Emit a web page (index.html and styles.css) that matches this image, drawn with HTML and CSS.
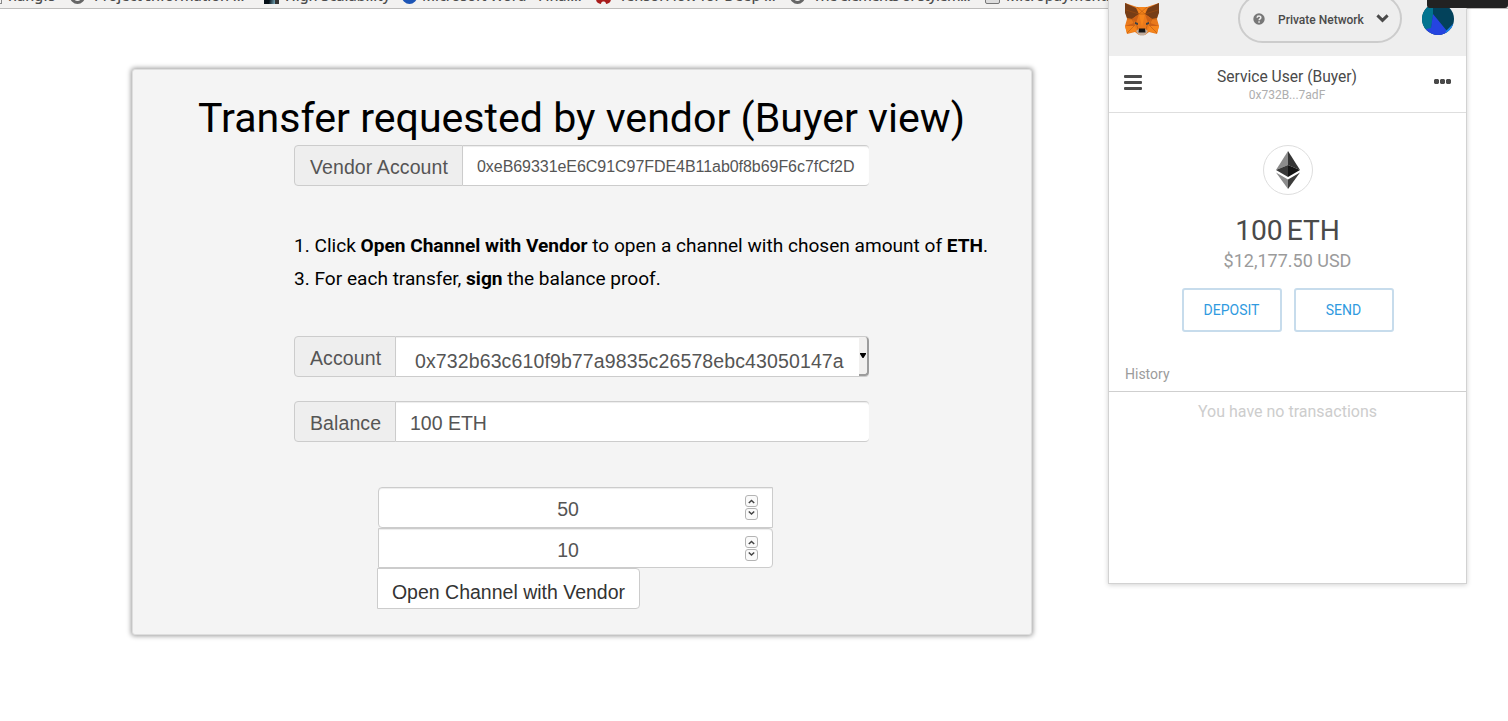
FILE: index.html
```html
<!DOCTYPE html>
<html lang="en">
<head>
<meta charset="utf-8">
<title>Transfer requested by vendor</title>
<link rel="stylesheet" href="styles.css">
</head>
<body>
<nav class="bookmarks">
  <span class="bm bm-1"><i class="page"></i><b>hangfs</b></span>
  <span class="bm bm-2"><i class="globe"></i><b>Project Information ...</b></span>
  <span class="bm bm-3"><i class="photo"></i><b>High Scalability</b></span>
  <span class="bm bm-4"><i class="blue"></i><b>Microsoft Word - Final...</b></span>
  <span class="bm bm-5"><i class="red"></i><b>TensorFlow for Deep ...</b></span>
  <span class="bm bm-6"><i class="globe"></i><b>The elements of stylem...</b></span>
  <span class="bm bm-7"><i class="folder"></i><b>Micropayments</b></span>
</nav>

<main class="card">
  <h1><span>Transfer requested by vendor (Buyer view)</span></h1>
  <div class="group">
    <label class="addon vendor"><span>Vendor Account</span></label>
    <div class="field hash"><span>0xeB69331eE6C91C97FDE4B11ab0f8b69F6c7fCf2D</span></div>
  </div>
  <div class="steps">
    <p><span>1. Click <strong>Open Channel with Vendor</strong> to open a channel with chosen amount of <strong>ETH</strong>.</span></p>
    <p><span>3. For each transfer, <strong>sign</strong> the balance proof.</span></p>
  </div>
  <div class="group account">
    <label class="addon"><span>Account</span></label>
    <div class="field select"><span>0x732b63c610f9b77a9835c26578ebc43050147a</span><div class="drop"><svg width="6" height="5" viewBox="0 0 6 5"><path d="M0 0h6v1L3.5 5h-1L0 1z"/></svg></div></div>
  </div>
  <div class="group balance">
    <label class="addon"><span>Balance</span></label>
    <div class="field"><span>100 ETH</span></div>
  </div>
  <div class="amounts">
    <div class="number first"><span>50</span>
      <svg class="spin" width="14" height="26" viewBox="0 0 14 26"><g fill="#fafafa" stroke="#b4b4b4"><rect x=".5" y=".5" width="12" height="11" rx="2.5"/><rect x=".5" y="13.5" width="12" height="11" rx="2.5"/></g><path d="M3.8 8l2.7-2.5L9.2 8M3.8 16.5l2.7 2.5 2.7-2.5" fill="none" stroke="#444" stroke-width="1.5"/></svg>
    </div>
    <div class="number second"><span>10</span>
      <svg class="spin" width="14" height="26" viewBox="0 0 14 26"><g fill="#fafafa" stroke="#b4b4b4"><rect x=".5" y=".5" width="12" height="11" rx="2.5"/><rect x=".5" y="13.5" width="12" height="11" rx="2.5"/></g><path d="M3.8 8l2.7-2.5L9.2 8M3.8 16.5l2.7 2.5 2.7-2.5" fill="none" stroke="#444" stroke-width="1.5"/></svg>
    </div>
    <button class="open"><span>Open Channel with Vendor</span></button>
  </div>
</main>

<aside class="wallet">
  <header class="wallet-head">
    <svg class="fox" width="36" height="34" viewBox="0 0 36 34">
      <path fill="#e9791b" d="M1 1l12 4h10l12-4-1 11-1 5 2 7-2 8-8-2-4 3h-6l-4-3-8 2-2-8 2-7-1-5z"/>
      <path fill="#763d16" d="M1 1l11 5 3 6-7 5-5-1-2-5zM35 1L24 6l-3 6 7 5 5-1 2-5z"/>
      <path fill="#f6851b" d="M13 5h10l-2 7-3 13-3-13zM1 24l9-1 3 6-10 2zM35 24l-9-1-3 6 10 2z"/>
      <path fill="#cd6116" d="M8 17l7-5-3 9zM28 17l-7-5 3 9zM1 24l9-3v3zM35 24l-9-3v3z"/>
      <path fill="none" stroke="#a9510f" stroke-width=".5" d="M13 5l8 7M23 5l-8 7h6M3 17l5 0 3 6-8 8M33 17l-5 0-3 6 8 8M12 21l3 9M24 21l-3 9M2 8l13 4M34 8l-13 4"/>
      <path fill="#c0ad9e" d="M12 29l3-2h6l3 2-2 3-2 1.5h-4L14 32z"/>
      <path fill="#161616" d="M15 26.500h6l.5 4h-7z"/>
      <path fill="#394048" d="M11 20l3 1v2l-3-1zM25 20l-3 1v2l3-1z"/>
    </svg>
    <div class="network">
      <svg class="help" width="12" height="12" viewBox="0 0 12 12"><circle cx="6" cy="6" r="5.7" fill="#777"/><path d="M4.100 4.700C4.200 2.400 7.900 2.500 7.800 4.600 7.700 5.900 6.100 5.800 6.100 7.300" fill="none" stroke="#eee" stroke-width="1.5"/><path d="M5.300 8.300h1.500v1.400H5.300z" fill="#eee"/></svg>
      <span>Private Network</span>
      <svg class="chev" width="13" height="9" viewBox="0 0 13 9"><path d="M1.400 1.400l5.100 5 5.100-5" fill="none" stroke="#4a4a4a" stroke-width="2.900"/></svg>
    </div>
    <svg class="avatar" width="32" height="32" viewBox="0 0 32 32"><defs><clipPath id="disc"><circle cx="16" cy="16" r="16"/></clipPath></defs><g clip-path="url(#disc)"><path fill="#03425b" d="M0 0h32v32H0z"/><path fill="#027490" d="M0 0h11v13L9 26 0 28z"/><path fill="#2544e0" d="M11 11l14 17v4H5l-1-6 5-1z"/><path fill="#1a83ee" d="M24 28l8-8v12h-9z"/></g></svg>
  </header>
  <div class="identity">
    <svg width="18" height="15" viewBox="0 0 18 15"><path fill="#4a4a4a" d="M1 0h16q1 0 1 1v1q0 1-1 1H1Q0 3 0 2V1Q0 0 1 0zM1 6h16q1 0 1 1v1q0 1-1 1H1q-1 0-1-1V7q0-1 1-1zM1 12h16q1 0 1 1v1q0 1-1 1H1q-1 0-1-1v-1q0-1 1-1z"/></svg>
    <div class="who"><span class="name">Service User (Buyer)</span><span class="addr">0x732B...7adF</span></div>
    <svg width="17" height="5" viewBox="0 0 17 5"><path fill="#4a4a4a" d="M1 0h3l1 1v3L4 5H1L0 4V1zM7 0h3l1 1v3l-1 1H7L6 4V1zM13 0h3l1 1v3l-1 1h-3l-1-1V1z"/></svg>
  </div>
  <div class="funds">
    <div class="coin"><svg width="24" height="38" viewBox="0 0 24 38"><path fill="#8c8c8c" d="M12 0v14L0 19z"/><path fill="#343434" d="M12 0v14l12 5z"/><path fill="#393939" d="M12 14v12L0 19z"/><path fill="#141414" d="M12 14v12l12-7z"/><path fill="#8c8c8c" d="M0 21.500l12 7V38z"/><path fill="#3c3c3b" d="M24 21.500l-12 7V38z"/></svg></div>
    <div class="total"><span>100 ETH</span></div>
    <div class="usd"><span>$12,177.50 USD</span></div>
    <div class="actions"><button><span>DEPOSIT</span></button><button><span>SEND</span></button></div>
  </div>
  <div class="history"><span>History</span></div>
  <div class="empty"><span>You have no transactions</span></div>
</aside>
<div class="tooltip"></div>
</body>
</html>
```

FILE: styles.css
```css
* { box-sizing: border-box; }
html, body { margin: 0; height: 100%; overflow: hidden; background: #fff; }
body { position: relative; font-family: "Liberation Sans", Arial, sans-serif; color: #000; }
button { margin: 0; padding: 0; background: #fff; font: inherit; }
svg { display: block; flex: none; }
span { white-space: nowrap; }

.bookmarks { display: flex; height: 9px; overflow: hidden; background: #f2f1f0; border-bottom: 1px solid #bdbcbb; }
.bm { display: flex; flex: none; align-items: flex-start; height: 20px; margin-top: -14px; }
.bm b { font: 500 14.4px/20px "Noto Sans", sans-serif; color: #4c4c4c; white-space: nowrap; }
.bm i { flex: none; width: 15px; height: 15px; margin: 3px 6px 0 0; }
.bm-1 { width: 83px; margin-left: -13px; }
.bm-2 { width: 194px; }
.bm-2 i { margin-right: 9px; }
.bm-3 { width: 138px; }
.bm-4 { width: 194px; }
.bm-4 i { margin-right: 5px; }
.bm-4 b { letter-spacing: -.1px; }
.bm-5 { width: 194px; }
.bm-5 i { margin-right: 8px; }
.bm-6 { width: 195px; }
.bm-6 i { margin-right: 8px; }
.bm-6 b { letter-spacing: -.6px; }
.page { border: 1px solid #888; }
.globe { border: 3px solid #666; border-radius: 50%; }
.photo { background: linear-gradient(100deg, #061018 40%, #6f9fb0 75%, #333 76%); }
.blue { background: #1d55b5; border-radius: 50%; }
.red { background: radial-gradient(circle at 50% 100%, #f2f1f0 2px, #a81c1c 3px); border-radius: 5px; }
.folder { background: #ddd; border: 1px solid #777; border-radius: 2px; }

.card { width: 900px; height: 566px; margin: 60px 0 0 132px; padding: 23px 0 0 161px; background: #f4f4f4; border: 1px solid #dedede; border-radius: 3px; box-shadow: 0 0 5px 1px #9a9a9a; }
h1 { margin: 0 0 0 -96px; height: 52px; font: 400 41.12px/50px Roboto, sans-serif; }
.group { display: flex; width: 575px; height: 41px; font-size: 19.5px; color: #555; }
.addon { display: flex; align-items: center; width: 102px; padding: 4px 0 0 15px; background: #eee; border: 1px solid #ccc; border-radius: 4px 0 0 4px; letter-spacing: .1px; }
.vendor { width: 169px; }
.field { display: flex; flex: 1; align-items: center; padding: 4px 0 0 14px; background: #fff; border: solid #ccc; border-width: 1px 0; border-radius: 0 4px 4px 0; box-shadow: inset 0 1px 1px rgba(0,0,0,.075); }
.hash { padding-top: 3px; font-size: 16px; letter-spacing: -.05px; }
.steps { height: 99px; margin-top: 43px; font: 19.08px/33px Roboto, sans-serif; }
.steps p { margin: 0; }
.account { margin-top: 8px; }
.select { padding: 0 0 0 19px; justify-content: space-between; letter-spacing: .12px; }
.select > span { padding-top: 10px; }
.drop { display: flex; align-items: center; justify-content: center; width: 10px; height: 39px; background: #f1f0ef; border: solid #9c9c9c; border-width: 0 2px 2px 0; border-radius: 0 4px 4px 0; }
.balance { margin-top: 24px; }
.amounts { width: 396px; margin: 45px 0 0 83px; font-size: 19.5px; }
.number { display: flex; justify-content: center; align-items: center; position: relative; width: 395px; height: 41px; margin-left: 1px; padding: 4px 15px 0 0; background: #fff; border: 1px solid #ccc; box-shadow: inset 0 1px 1px rgba(0,0,0,.075); color: #555; }
.first { border-radius: 4px 0 0 4px; }
.second { height: 40px; border-radius: 0 4px 4px 0; }
.spin { position: absolute; right: 13.5px; top: 6.5px; }
.open { display: block; width: 263px; height: 41px; padding-top: 8px; border: 1px solid #ccc; border-radius: 0 4px 4px 0; color: #333; }

.wallet { position: absolute; top: 0; left: 1108px; width: 359px; height: 584px; background: #fff; border: solid #d2d2d2; border-width: 0 1px 1px; box-shadow: 0 1px 5px rgba(0,0,0,.18); font-family: Roboto, sans-serif; overflow: hidden; }
.wallet-head { display: flex; height: 56px; padding-left: 15px; background: #eee; }
.fox { margin-top: 2px; }
.network { display: flex; align-items: center; width: 164px; height: 49px; margin: -6px 20px 0 78px; padding: 0 11px 0 13px; border: 2px solid #ccc; border-radius: 25px; font-size: 12px; font-weight: 500; color: #4a4a4a; }
.network span { margin: 2px auto 0 13px; }
.avatar { margin-top: 3px; }
.identity { display: flex; justify-content: space-between; align-items: center; height: 57px; padding: 0 15px; border-bottom: 1px solid #dedede; }
.identity > svg:first-child { margin-top: -3px; }
.identity > svg:last-child { margin-top: -5px; }
.who { display: flex; flex-direction: column; align-items: center; padding: 2px 2px 0 0; }
.name { font-size: 15.6px; line-height: 20px; color: #4a4a4a; }
.addr { font-size: 12px; line-height: 17px; color: #aeaeae; }
.funds { display: flex; flex-direction: column; align-items: center; height: 248px; padding-top: 32px; }
.coin { display: grid; place-items: center; width: 50px; height: 50px; border: 1px solid #dedede; border-radius: 50%; }
.total { margin-top: 18px; font-size: 28.2px; line-height: 36px; color: #4a4a4a; word-spacing: -3px; }
.usd { font-size: 18px; line-height: 24px; color: #9b9b9b; }
.actions { display: flex; gap: 12px; margin-top: 15px; }
.actions button { width: 100px; height: 44px; border: 2px solid #c7dcec; border-radius: 3px; color: #2f9ae0; font-size: 14px; }
.history { height: 31px; padding: 3px 0 0 16px; border-bottom: 1px solid #cfcfcf; font-size: 14px; line-height: 20px; color: #9b9b9b; }
.empty { padding-top: 10px; text-align: center; font-size: 16px; line-height: 20px; color: #cdcdcd; }
.tooltip { position: absolute; top: 0; right: 0; width: 81px; height: 8px; background: #222; border-radius: 0 0 3px 3px; }
```
